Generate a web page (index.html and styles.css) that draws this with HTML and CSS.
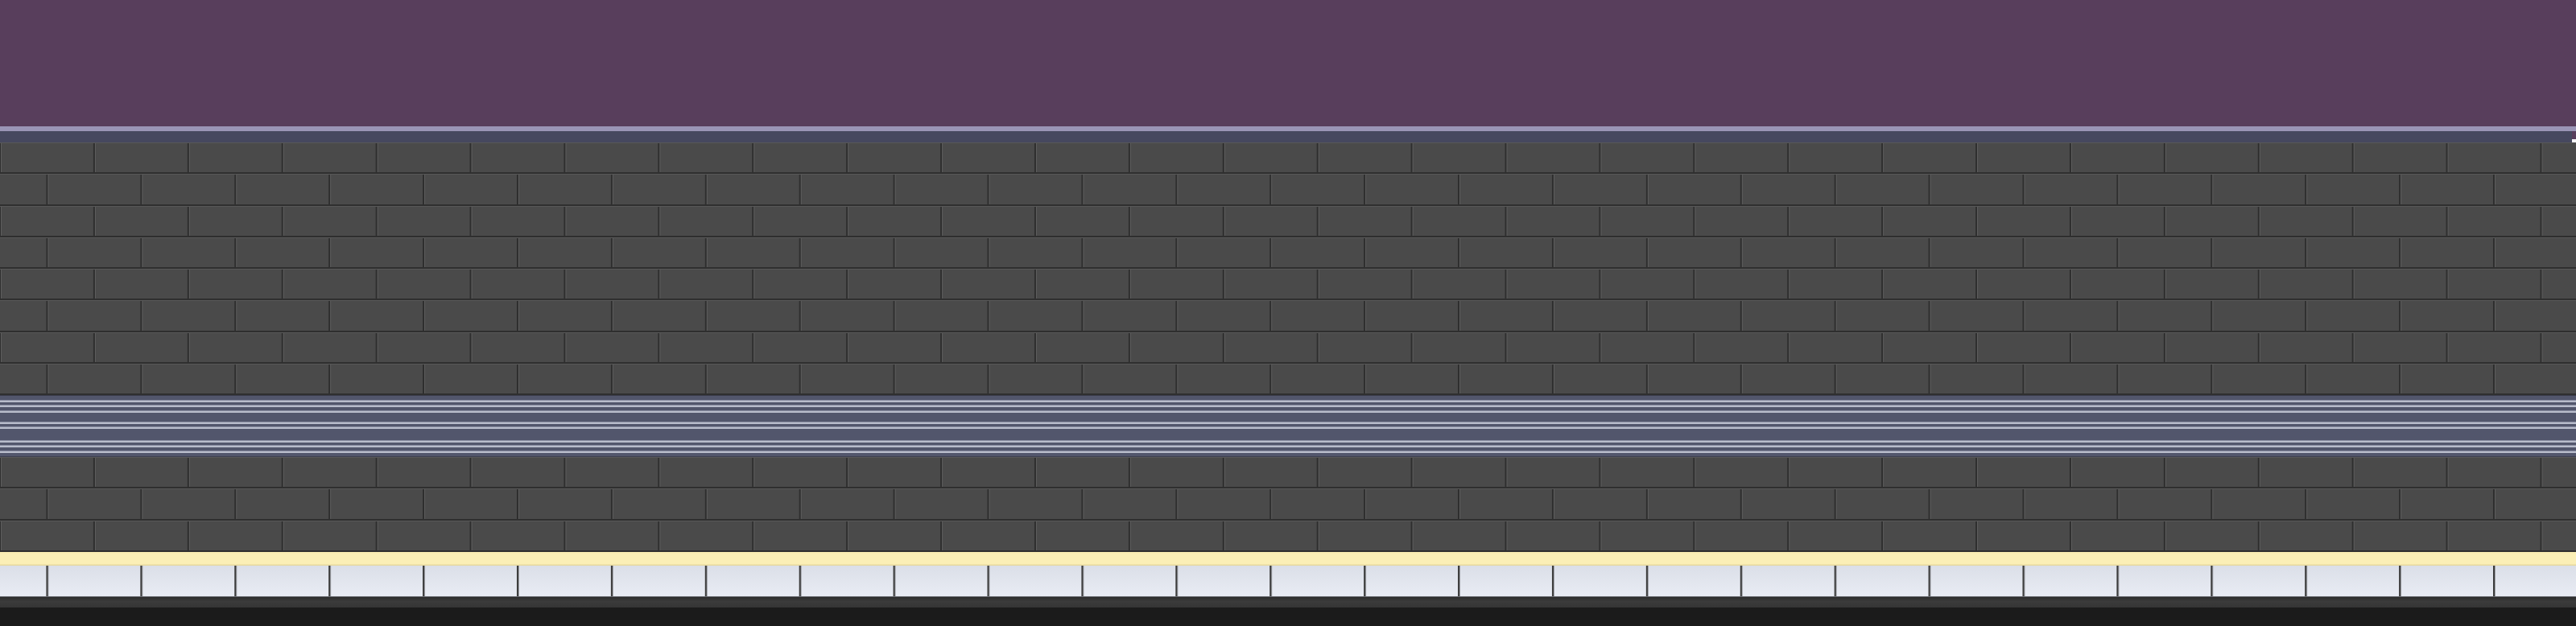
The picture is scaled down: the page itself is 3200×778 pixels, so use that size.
FILE: index.html
```html
<!DOCTYPE html>
<html lang="en">
<head>
<meta charset="utf-8">
<title>Level</title>
<link rel="stylesheet" href="styles.css">
</head>
<body>
<main class="scene">
  <div class="sky"></div>
  <div class="ledge"></div>
  <div class="ledge-shadow"><span class="marker"></span></div>
  <div class="wall wall-upper">
    <div class="course"></div>
    <div class="course offset"></div>
    <div class="course"></div>
    <div class="course offset"></div>
    <div class="course"></div>
    <div class="course offset"></div>
    <div class="course"></div>
    <div class="course offset"></div>
  </div>
  <div class="rails"></div>
  <div class="wall wall-lower">
    <div class="course"></div>
    <div class="course offset"></div>
    <div class="course"></div>
  </div>
  <div class="sand"></div>
  <div class="tiles"></div>
  <div class="base"></div>
  <div class="floor"></div>
</main>
</body>
</html>
```
FILE: styles.css
```css
html, body {
  margin: 0;
  padding: 0;
  background: #1b1b1b;
}
.scene {
  width: 3200px;
  height: 778px;
  display: flex;
  flex-direction: column;
  overflow: hidden;
}
.sky {
  height: 157px;
  background: #583e5c;
}
.ledge {
  height: 6px;
  background: #9a95b6;
}
.ledge-shadow {
  position: relative;
  height: 14px;
  background: #46485f;
}
.marker {
  position: absolute;
  right: 0;
  top: 0;
  width: 5px;
  height: 10px;
  background: #583e5c;
  border-bottom: 4px solid #f4f4f6;
}
.wall {
  display: flex;
  flex-direction: column;
  background: #4a4a4a;
}
.wall-upper { height: 314px; }
.wall-lower { height: 118px; }
.course {
  flex: 1;
  background-color: #4a4a4a;
  background-image:
    linear-gradient(to bottom, #585858 0, #585858 1px, transparent 1px, transparent calc(100% - 2px), #2f2f2f calc(100% - 2px), #2f2f2f 100%),
    linear-gradient(to right, #2e2e2e 0, #2e2e2e 2px, #5e5e5e 2px, #5e5e5e 3px, transparent 3px);
  background-size: 100% 100%, 116.92px 100%;
  background-repeat: no-repeat, repeat-x;
  background-position: 0 0, -1px 0;
}
.course.offset {
  background-position: 0 0, 57.45px 0;
}
.rails {
  height: 77px;
  background-color: #52566c;
  background-image: linear-gradient(to bottom,
    #3a3c4a 0, #3a3c4a 1px, transparent 1px,
    transparent 6px, #8b8fa3 6px, #8b8fa3 7px, #b8bccb 7px, #b8bccb 9px, transparent 9px,
    transparent 12px, #8b8fa3 12px, #8b8fa3 13px, #b8bccb 13px, #b8bccb 15px, transparent 15px,
    transparent 19px, #8b8fa3 19px, #8b8fa3 20px, #b8bccb 20px, #b8bccb 22px, transparent 22px,
    transparent 33px, #8b8fa3 33px, #8b8fa3 34px, #b8bccb 34px, #b8bccb 36px, transparent 36px,
    transparent 39px, #8b8fa3 39px, #8b8fa3 40px, #b8bccb 40px, #b8bccb 42px, transparent 42px,
    transparent 56px, #8b8fa3 56px, #8b8fa3 57px, #b8bccb 57px, #b8bccb 59px, transparent 59px,
    transparent 62px, #8b8fa3 62px, #8b8fa3 63px, #b8bccb 63px, #b8bccb 65px, transparent 65px,
    transparent 69px, #8b8fa3 69px, #8b8fa3 70px, #b8bccb 70px, #b8bccb 72px, transparent 72px,
    transparent 76px, #3e4050 76px, #3e4050 77px);
}
.sand {
  height: 17px;
  background: linear-gradient(to bottom, #f6e9ad 0, #fbefb6 2px, #fbefb6 15px, #e6d89e 16px, #e6d89e 17px);
}
.tiles {
  height: 39px;
  background-color: #e3e7ef;
  background-image:
    linear-gradient(to bottom, transparent calc(100% - 1px), #6a6c72 calc(100% - 1px)),
    linear-gradient(to right, #3c3c3c 0, #3c3c3c 2px, #9c9ea4 2px, #9c9ea4 3px, transparent 3px),
    linear-gradient(to bottom, #dbdfe8 0, #e9ecf4 100%);
  background-size: 100% 100%, 116.92px 100%, 100% 100%;
  background-repeat: no-repeat, repeat-x, no-repeat;
  background-position: 0 0, 57.45px 0, 0 0;
}
.base {
  height: 13px;
  background: linear-gradient(to bottom, #2c2c2c 0, #3b3b3b 40%, #353535 100%);
}
.floor {
  flex: 1;
  background: #1b1b1b;
}
```
